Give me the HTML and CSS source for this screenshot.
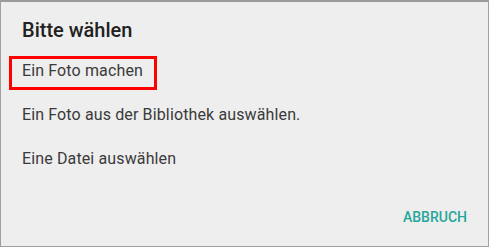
FILE: index.html
```html
<!DOCTYPE html>
<html lang="de">
<head>
  <meta charset="UTF-8" />
  <title>Bitte wählen</title>
  <link rel="stylesheet" href="styles.css">
</head>
<body>
  <div class="dialog">
    <h1 class="dialog-title">Bitte wählen</h1>

    <ul class="choice-list">
      <li class="choice">
        <span class="choice-label is-marked">Ein Foto machen</span>
      </li>
      <li class="choice">
        <span class="choice-label">Ein Foto aus der Bibliothek auswählen.</span>
      </li>
      <li class="choice">
        <span class="choice-label">Eine Datei auswählen</span>
      </li>
    </ul>

    <div class="dialog-actions">
      <button class="text-button">Abbruch</button>
    </div>
  </div>
</body>
</html>
```

FILE: styles.css
```css
/* Reset */
* {
  box-sizing: border-box;
  margin: 0;
  padding: 0;
}

body {
  font-family: Roboto, "Liberation Sans", sans-serif;
  background: #eeeeee;
  color: #333;
}

.dialog {
  height: 100vh;
  background: #eeeeee;
  border: 1px solid #a0a0a0;
  border-top: 2px solid #9a9a9a;
  padding: 16px 21px 0 21px;
}

.dialog-title {
  font-size: 20px;
  line-height: 24px;
  font-weight: 500;
  color: #212121;
  margin-bottom: 7px;
}

.choice-list {
  list-style: none;
}

.choice {
  padding: 12px 0;
  font-size: 16px;
  line-height: 20px;
  letter-spacing: 0.13px;
  color: #3a3a3a;
}

/* red annotation frame around the first option */
.choice-label.is-marked {
  display: inline-block;
  margin: -5px -14px -9px -13px;
  padding: 2px 11px 6px 10px;
  border: 3px solid #ff0000;
}

.dialog-actions {
  display: flex;
  justify-content: flex-end;
  margin-top: 28px;
}

.text-button {
  background: none;
  border: none;
  font-family: inherit;
  font-size: 14px;
  line-height: 16px;
  font-weight: 500;
  text-transform: uppercase;
  color: #26a69a;
  cursor: pointer;
}
```
